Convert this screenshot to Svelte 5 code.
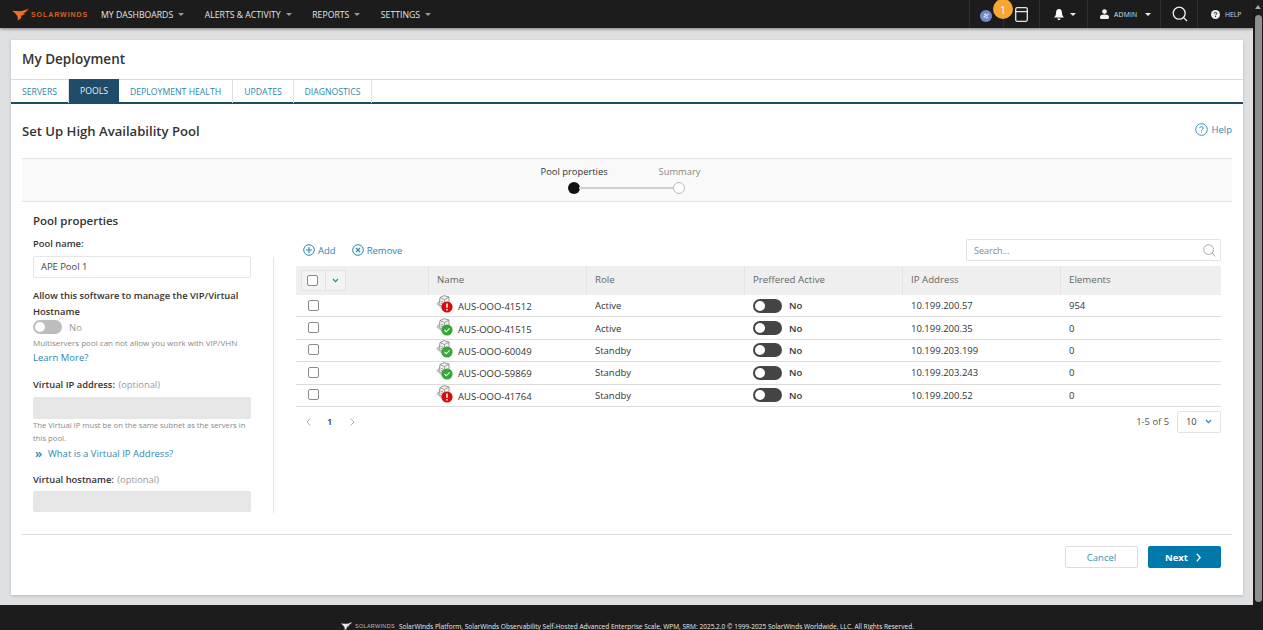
<script>
  const tabs = ['SERVERS', 'POOLS', 'DEPLOYMENT HEALTH', 'UPDATES', 'DIAGNOSTICS'];
  const nav = ['MY DASHBOARDS', 'ALERTS & ACTIVITY', 'REPORTS', 'SETTINGS'];
  const cols = ['Name', 'Role', 'Preffered Active', 'IP Address', 'Elements'];
  const rows = [
    { name: 'AUS-OOO-41512', role: 'Active', ip: '10.199.200.57', el: '954', ok: false },
    { name: 'AUS-OOO-41515', role: 'Active', ip: '10.199.200.35', el: '0', ok: true },
    { name: 'AUS-OOO-60049', role: 'Standby', ip: '10.199.203.199', el: '0', ok: true },
    { name: 'AUS-OOO-59869', role: 'Standby', ip: '10.199.203.243', el: '0', ok: true },
    { name: 'AUS-OOO-41764', role: 'Standby', ip: '10.199.200.52', el: '0', ok: false }
  ];
</script>

<div class="screen">
  <div class="upper">
    <div class="page">
      <header class="top">
        <div class="brand">
          <svg width="17" height="13" viewBox="0 0 20 14"><path d="M0 2.5 L8 3.2 C11 3.4 15 2.5 19.5 0 C18 3 15.5 5 12.5 5.8 L15.5 6.2 C13.5 8 11.5 8.6 9.5 8.6 L11.5 9.6 C10.5 11.5 8.5 13 6.5 14 C7.5 11.5 6.5 8.5 4.5 6.5 C3.2 5 1.5 3.6 0 2.5 Z" fill="#f0702a"/></svg>
          <span>SOLARWINDS</span>
        </div>
        <nav class="menu">
          {#each nav as n}
            <span class="item">{n}<i class="caret gray"></i></span>
          {/each}
        </nav>
        <div class="tools">
          <div class="tool t-window">
            <svg class="globe" width="12" height="12" viewBox="0 0 12 12"><circle cx="6" cy="6" r="6" fill="#6f8ac9"/><path d="M3.5 7.5 L8.5 4 M4 5 L6 3.8 M6 8.2 L8 7" stroke="#dfe6f6" stroke-width="1.2" fill="none"/></svg>
            <svg class="win" width="13" height="15" viewBox="0 0 13 15"><rect x=".7" y=".7" width="11.6" height="13.6" rx="1.5" fill="none" stroke="#e6e6e6" stroke-width="1.3"/><path d="M.7 4.6 H12.3" stroke="#e6e6e6" stroke-width="1.3"/></svg>
            <span class="badge">1</span>
          </div>
          <div class="tool t-bell">
            <svg width="10" height="11" viewBox="0 0 10 11"><path d="M5 0 C7.2 0 8 2 8 4 C8 6.5 9 7.5 10 8.5 H0 C1 7.5 2 6.5 2 4 C2 2 2.8 0 5 0 Z M3.5 9.4 H6.5 C6.5 10.4 5.8 11 5 11 C4.2 11 3.5 10.4 3.5 9.4 Z" fill="#fff"/></svg>
            <i class="caret white"></i>
          </div>
          <div class="tool t-user">
            <svg width="9" height="10" viewBox="0 0 10 11"><circle cx="5" cy="2.8" r="2.6" fill="#f2f2f2"/><path d="M0 9.6 V8.6 C0 6.8 2 6 5 6 C8 6 10 6.8 10 8.6 V9.6 C10 10.5 9 11 8 11 H2 C1 11 0 10.5 0 9.6 Z" fill="#f2f2f2"/></svg>
            <span class="admin">ADMIN</span>
            <i class="caret white"></i>
          </div>
          <div class="tool t-search">
            <svg width="16" height="16" viewBox="0 0 16 16"><circle cx="7.2" cy="7.2" r="6" fill="none" stroke="#f0f0f0" stroke-width="1.3"/><path d="M11.6 11.6 L15 15" stroke="#f0f0f0" stroke-width="1.3"/></svg>
          </div>
          <div class="tool t-help">
            <svg width="9" height="9" viewBox="0 0 9 9"><circle cx="4.5" cy="4.5" r="4.5" fill="#f0f0f0"/><path d="M3.1 3.5 C3.2 2 5.8 2 5.8 3.4 C5.8 4.4 4.5 4.3 4.5 5.4" fill="none" stroke="#1c1c1c" stroke-width="1"/><rect x="4" y="6.1" width="1" height="1" fill="#1c1c1c"/></svg>
            <span class="helptxt">HELP</span>
          </div>
        </div>
      </header>

      <main class="main">
        <section class="card">
          <h1>My Deployment</h1>
          <div class="tabs">
            {#each tabs as t, i}
              <span class="tab" class:on={i === 1}>{t}</span>
            {/each}
          </div>
          <div class="subhead">
            <h2>Set Up High Availability Pool</h2>
            <span class="helplink">
              <svg width="13" height="13" viewBox="0 0 13 13"><circle cx="6.5" cy="6.5" r="5.8" fill="none" stroke="#3a8fb5" stroke-width="1"/><path d="M4.7 5.1 C4.8 3.2 8.2 3.2 8.2 5 C8.2 6.3 6.5 6.2 6.5 7.7" fill="none" stroke="#3a8fb5" stroke-width="1"/><rect x="6" y="8.7" width="1" height="1" fill="#3a8fb5"/></svg>
              Help
            </span>
          </div>

          <div class="stepband">
            <div class="steps">
              <div class="labels"><span class="s1">Pool properties</span><span class="s2">Summary</span></div>
              <div class="track"><i class="dot"></i><i class="line"></i><i class="ring"></i></div>
            </div>
          </div>

          <div class="body">
            <aside class="form">
              <h3>Pool properties</h3>
              <div class="lab first">Pool name:</div>
              <div class="input">APE Pool 1</div>
              <div class="lab multi">Allow this software to manage the VIP/Virtual Hostname</div>
              <div class="toggle-row"><span class="sw off"><i></i></span><span class="offno">No</span></div>
              <p class="hint one">Multiservers pool can not allow you work with VIP/VHN</p>
              <a class="learn">Learn More?</a>
              <div class="lab vip">Virtual IP address: <em>(optional)</em></div>
              <div class="input dis"></div>
              <p class="hint two">The Virtual IP must be on the same subnet as the servers in this pool.</p>
              <a class="what"><span class="chev">»</span>What is a Virtual IP Address?</a>
              <div class="lab vh">Virtual hostname: <em>(optional)</em></div>
              <div class="input dis last"></div>
            </aside>

            <div class="tablearea">
              <div class="actions">
                <span class="act">
                  <svg width="12" height="12" viewBox="0 0 12 12"><circle cx="6" cy="6" r="5.3" fill="none" stroke="#2b87ad"/><path d="M6 3 V9 M3 6 H9" stroke="#2b87ad" stroke-width="1.1"/></svg>
                  Add
                </span>
                <span class="act">
                  <svg width="12" height="12" viewBox="0 0 12 12"><circle cx="6" cy="6" r="5.3" fill="none" stroke="#2b87ad"/><path d="M4 4 L8 8 M8 4 L4 8" stroke="#2b87ad" stroke-width="1.1"/></svg>
                  Remove
                </span>
                <div class="search">
                  <span>Search...</span>
                  <svg width="13" height="13" viewBox="0 0 13 13"><circle cx="5.6" cy="5.6" r="4.9" fill="none" stroke="#aaa"/><path d="M9.2 9.2 L12.4 12.4" stroke="#aaa"/></svg>
                </div>
              </div>

              <div class="table">
                <div class="tr head">
                  <div class="td sel">
                    <div class="selbox">
                      <span class="cbwrap"><i class="cb"></i></span>
                      <span class="chevwrap"><svg width="7" height="5" viewBox="0 0 7 5"><path d="M1 1 L3.5 3.6 L6 1" fill="none" stroke="#2b87ad" stroke-width="1.2"/></svg></span>
                    </div>
                  </div>
                  {#each cols as c}<div class="td">{c}</div>{/each}
                </div>
                {#each rows as r}
                  <div class="tr">
                    <div class="td sel"><i class="cb rowcb"></i></div>
                    <div class="td name">
                      <span class="srv">
                        <svg width="18" height="18" viewBox="0 0 18 18">
                          <path d="M4 2.5 L8 .6 L13 2 V9 L8 12 L3 9.5 Z" fill="#f1f1f1" stroke="#8c8c8c" stroke-width=".9"/>
                          <path d="M4 2.5 L8.5 4.6 L13 2 M8.5 4.6 V12 M3 7 L.8 8.6 L6 13.2 L8.5 12 M4.5 6 L7.5 7.4 M4.5 8 L7.5 9.4" fill="none" stroke="#8c8c8c" stroke-width=".8"/>
                          <circle cx="11" cy="12" r="5.6" fill={r.ok ? '#34a834' : '#d40c0c'}/>
                          {#if r.ok}
                            <path d="M8.5 12 L10.3 13.8 L13.5 10.4" fill="none" stroke="#fff" stroke-width="1.1"/>
                          {:else}
                            <path d="M11 8.6 V12.8 M11 14 V15.4" stroke="#fff" stroke-width="1.5"/>
                          {/if}
                        </svg>
                      </span>
                      <span class="nm">{r.name}</span>
                    </div>
                    <div class="td">{r.role}</div>
                    <div class="td pref"><span class="sw dark"><i></i></span><b>No</b></div>
                    <div class="td">{r.ip}</div>
                    <div class="td">{r.el}</div>
                  </div>
                {/each}
              </div>

              <div class="pager">
                <svg width="5" height="8" viewBox="0 0 5 8"><path d="M4.2 .6 L1 4 L4.2 7.4" fill="none" stroke="#aaa"/></svg>
                <span class="pg">1</span>
                <svg width="5" height="8" viewBox="0 0 5 8"><path d="M.8 .6 L4 4 L.8 7.4" fill="none" stroke="#aaa"/></svg>
                <span class="count">1-5 of 5</span>
                <div class="size">10 <svg width="7" height="5" viewBox="0 0 7 5"><path d="M1 1 L3.5 3.6 L6 1" fill="none" stroke="#2b87ad" stroke-width="1.2"/></svg></div>
              </div>
            </div>
          </div>

          <div class="buttons">
            <button class="cancel">Cancel</button>
            <button class="next">Next <svg width="5" height="9" viewBox="0 0 5 9"><path d="M.8 .8 L4.2 4.5 L.8 8.2" fill="none" stroke="#fff" stroke-width="1.3"/></svg></button>
          </div>
        </section>
      </main>
    </div>
    <div class="scroll"><i class="arrow"></i><i class="thumb"></i></div>
  </div>
  <footer class="foot">
    <svg width="13" height="8" viewBox="0 0 20 14"><path d="M0 2.5 L8 3.2 C11 3.4 15 2.5 19.5 0 C18 3 15.5 5 12.5 5.8 L15.5 6.2 C13.5 8 11.5 8.6 9.5 8.6 L11.5 9.6 C10.5 11.5 8.5 13 6.5 14 C7.5 11.5 6.5 8.5 4.5 6.5 C3.2 5 1.5 3.6 0 2.5 Z" fill="#e8e8e8"/></svg>
    <span class="fbrand">SOLARWINDS</span>
    <span class="ftext">SolarWinds Platform, SolarWinds Observability Self-Hosted Advanced Enterprise Scale, WPM, SRM: 2025.2.0 © 1999-2025 SolarWinds Worldwide, LLC. All Rights Reserved.</span>
  </footer>
</div>

<style>
  :global(body) { margin: 0; background: #dfe0e2; }
  .screen { width: 1263px; height: 630px; overflow: hidden; display: flex; flex-direction: column; font-family: "Open Sans", sans-serif; color: #333; font-size: 9px; }
  .upper { display: flex; height: 605px; flex: none; }
  .page { width: 1253px; flex: none; display: flex; flex-direction: column; }
  .scroll { width: 10px; background: #1c1c1c; position: relative; }
  .scroll .thumb { position: absolute; left: 2px; right: 1px; top: 15px; bottom: 3px; background: #8f8f8f; border-radius: 4px; }
  .scroll .arrow { position: absolute; left: 2px; top: 5px; border: 3.5px solid transparent; border-bottom: 4px solid #aaa; border-top: 0; }

  .top { height: 28px; background: #1c1c1c; display: flex; align-items: center; box-shadow: 0 1px 3px rgba(0,0,0,.45); flex: none; color: #e8e8e8; position: relative; z-index: 2; }
  .brand { display: flex; align-items: center; width: 101px; padding-left: 12px; box-sizing: border-box; gap: 2px; flex: none; }
  .brand span { color: #d5601f; font-size: 7px; font-weight: 700; letter-spacing: .95px; font-family: "Liberation Sans", sans-serif; }
  .menu { display: flex; flex: 1; gap: 20.5px; padding-top: 1px; }
  .item { display: inline-flex; align-items: center; gap: 5px; font-size: 8.7px; white-space: nowrap; color: #e4e4e4; }
  .caret { display: inline-block; width: 0; height: 0; border-left: 3px solid transparent; border-right: 3px solid transparent; border-top: 3px solid; }
  .caret.gray { color: #999; }
  .caret.white { color: #eee; }
  .tools { display: flex; height: 28px; flex: none; }
  .tool { display: flex; align-items: center; border-left: 1px solid #2e2e2e; box-sizing: border-box; position: relative; }
  .t-window { width: 70px; }
  .t-window::after { content: ""; position: absolute; left: 33px; top: 0; bottom: 0; width: 1px; background: #2e2e2e; }
  .globe { position: absolute; left: 10px; top: 10px; }
  .win { position: absolute; left: 45px; top: 7px; }
  .badge { position: absolute; left: 23px; top: -1px; width: 20px; height: 20px; border-radius: 50%; background: #f7a533; color: #fff; font-size: 11px; display: flex; align-items: center; justify-content: center; z-index: 1; }
  .t-bell { width: 48px; padding-left: 14px; gap: 6px; }
  .t-user { width: 73px; padding-left: 12px; gap: 5px; }
  .admin { font-size: 6.8px; color: #cfe0ea; letter-spacing: .2px; margin-right: 1px; width: 25px; }
  .t-search { width: 37px; padding-left: 11px; }
  .t-help { width: 56px; padding-left: 13px; gap: 5px; }
  .helptxt { font-size: 6.8px; color: #d4d4e8; }

  .main { flex: 1; padding: 12px 10px 10px 11px; min-height: 0; }
  .card { background: #fff; height: 555px; box-shadow: 0 1px 3px rgba(0,0,0,.18); display: flex; flex-direction: column; }
  h1 { margin: 0; height: 39px; line-height: 39px; padding-left: 11px; font-size: 13.5px; font-weight: 600; color: #333; box-sizing: border-box; }
  .tabs { display: flex; height: 25px; box-sizing: border-box; border-top: 1px solid #dcdcdc; border-bottom: 2px solid #1f4a66; flex: none; }
  .tab { display: flex; align-items: center; justify-content: center; box-sizing: border-box; font-size: 8.7px; color: #2f86ab; border-right: 1px solid #e0e0e0; height: 23px; white-space: nowrap; }
  .tab:nth-child(1) { width: 58px; }
  .tab:nth-child(2) { width: 50px; }
  .tab:nth-child(3) { width: 114px; }
  .tab:nth-child(4) { width: 61px; }
  .tab:nth-child(5) { width: 78px; }
  .tab.on { background: #204c6b; color: #e6eef4; margin-top: -1px; height: 24px; border-right: 0; }
  .subhead { display: flex; justify-content: space-between; align-items: center; height: 54px; padding: 0 11px; flex: none; }
  h2 { margin: 0; font-size: 13.1px; font-weight: 600; color: #333; }
  .helplink { display: flex; align-items: center; gap: 3px; color: #2f86ab; font-size: 9.5px; margin-bottom: 3px; }
  .stepband { margin: 0 11px; height: 44px; flex: none; box-sizing: border-box; background: #f9f9f9; border-top: 1px solid #e4e4e4; border-bottom: 1px solid #e4e4e4; display: flex; justify-content: center; }
  .steps { width: 161px; margin-right: 14px; }
  .labels { display: flex; justify-content: space-between; height: 20px; align-items: center; padding: 5px 0 0 1px; box-sizing: border-box; }
  .labels span { font-size: 9.4px; white-space: nowrap; }
  .s1 { color: #333; }
  .s2 { color: #888; }
  .track { display: flex; align-items: center; padding: 3px 0 0 28px; }
  .dot { width: 12px; height: 12px; border-radius: 50%; background: #111; flex: none; }
  .line { width: 95px; height: 1.5px; background: #d0d0d0; flex: none; margin-right: -1px; margin-left: -1px; }
  .ring { width: 12px; height: 12px; box-sizing: border-box; border: 1px solid #bbb; background: #fff; border-radius: 50%; flex: none; }

  .body { display: flex; flex: 1; min-height: 0; padding-left: 22px; }
  .form { width: 241px; box-sizing: border-box; padding-right: 23px; flex: none; position: relative; }
  .form::after { content: ""; position: absolute; right: 0; top: 55px; bottom: 21px; width: 1px; background: #e4e4e4; }
  h3 { margin: 11px 0 0; font-size: 11.5px; font-weight: 600; line-height: 15px; color: #333; }
  .lab { font-size: 9.4px; font-weight: 600; color: #333; line-height: 14px; }
  .lab em { font-style: normal; font-weight: 400; color: #999; margin-left: 1px; }
  .first { margin-top: 9px; }
  .input { height: 22px; box-sizing: border-box; border: 1px solid #e6e6e6; border-radius: 2px; margin-top: 5px; padding-left: 7px; font-size: 9.4px; line-height: 20px; color: #444; }
  .input.dis { background: #e6e6e6; }
  .input.last { margin-top: 4px; height: 21px; }
  .multi { margin-top: 10px; line-height: 16px; }
  .toggle-row { display: flex; align-items: center; height: 14px; gap: 7px; }
  .sw { display: inline-block; width: 29px; height: 14px; border-radius: 7px; position: relative; flex: none; }
  .sw i { position: absolute; left: 2px; top: 2px; width: 10px; height: 10px; border-radius: 50%; background: #fff; }
  .sw.off { background: #bdbdbd; }
  .sw.dark { background: #444; }
  .offno { color: #999; font-size: 9.5px; }
  .hint { margin: 0; color: #888; line-height: 13px; }
  .hint.one { margin-top: 2px; font-size: 8px; white-space: nowrap; }
  .hint.two { font-size: 7.7px; padding-right: 5px; }
  .learn { display: block; color: #2f86ab; font-size: 9.5px; line-height: 14px; margin-top: 2px; }
  .vip { margin-top: 13px; }
  .what { display: flex; align-items: center; color: #2f86ab; font-size: 9.5px; line-height: 14px; margin-top: 2px; }
  .chev { width: 15px; padding-left: 2px; box-sizing: border-box; font-size: 13px; font-weight: 600; line-height: 12px; margin-top: -2px; }
  .vh { margin-top: 12px; }

  .tablearea { width: 925px; flex: none; margin-left: 22px; position: relative; }
  .actions { display: flex; align-items: center; height: 22px; margin-top: 37px; padding-left: 7px; gap: 16px; }
  .act { display: inline-flex; align-items: center; gap: 3px; color: #2f86ab; font-size: 9.5px; }
  .search { margin-left: auto; width: 255px; height: 22px; box-sizing: border-box; border: 1px solid #e2e2e2; border-radius: 2px; display: flex; justify-content: space-between; align-items: center; padding: 0 4px 0 7px; color: #888; font-size: 9px; }
  .table { margin-top: 5px; }
  .tr { display: grid; grid-template-columns: 133px 158px 158px 158px 158px 160px; height: 22.4px; border-bottom: 1px solid #dcdcdc; box-sizing: border-box; align-items: center; font-size: 9.5px; color: #333; }
  .tr.head { height: 29px; background: #efefef; border-bottom: 0; color: #666; align-items: stretch; }
  .td { padding-left: 8px; white-space: nowrap; display: flex; align-items: center; height: 100%; box-sizing: border-box; }
  .head .td { border-right: 1px solid #e4e4e4; padding: 0 0 2px 8px; font-size: 9.7px; }
  .head .td:last-child { border-right: 0; }
  .td.sel { padding-left: 12px; }
  .head .td.sel { padding: 0 0 1px 5px; }
  .selbox { display: flex; height: 21px; width: 45px; border: 1px solid #e2e2e2; border-radius: 2px; box-sizing: border-box; background: #f3f3f3; }
  .cbwrap { width: 24px; display: flex; align-items: center; padding-left: 5px; box-sizing: border-box; border-right: 1px solid #e2e2e2; }
  .chevwrap { flex: 1; display: flex; align-items: center; justify-content: center; }
  .cb { display: block; width: 11px; height: 11px; border: 1px solid #8a8a8a; border-radius: 2px; box-sizing: border-box; background: #fff; }
  .rowcb { margin-top: -1px; }
  .name { padding-left: 7px; position: relative; }
  .srv { width: 18px; height: 18px; flex: none; margin-top: -3px; }
  .nm { margin-left: 4px; margin-top: 2px; }
  .pref { gap: 7px; }
  .pref b { font-weight: 600; }
  .pager { display: flex; align-items: center; height: 22px; margin-top: 4px; padding-left: 10px; color: #333; font-size: 9.4px; }
  .pg { margin: 0 18px 0 16px; color: #333; font-weight: 600; }
  .count { margin-left: auto; color: #555; margin-right: 8px; }
  .size { width: 44px; height: 22px; box-sizing: border-box; border: 1px solid #e2e2e2; border-radius: 2px; display: flex; align-items: center; padding-left: 8px; gap: 8px; color: #444; }
  .buttons { margin: 0 11px; height: 61px; flex: none; box-sizing: border-box; border-top: 1px solid #ddd; display: flex; justify-content: flex-end; align-items: flex-start; gap: 10px; padding: 11px 11px 0 0; }
  button { width: 73px; height: 22px; border-radius: 2px; font-family: inherit; font-size: 9.5px; box-sizing: border-box; padding: 0; }
  .cancel { background: #fff; border: 1px solid #ddd; color: #3a8fb5; }
  .next { background: #0079aa; border: 0; color: #fff; font-weight: 700; display: inline-flex; align-items: center; justify-content: center; gap: 8px; padding-right: 3px; }

  .foot { height: 25px; background: #1c1c1c; display: flex; align-items: flex-end; padding-left: 340px; gap: 2px; color: #e8e8e8; overflow: hidden; flex: none; }
  .foot svg { flex: none; }
  .fbrand { font-size: 5.5px; letter-spacing: .3px; line-height: 8px; color: #bbb; font-family: "Liberation Sans", sans-serif; }
  .ftext { font-size: 6.55px; line-height: 6px; white-space: nowrap; margin-left: 2px; color: #e8e8e8; }
</style>
